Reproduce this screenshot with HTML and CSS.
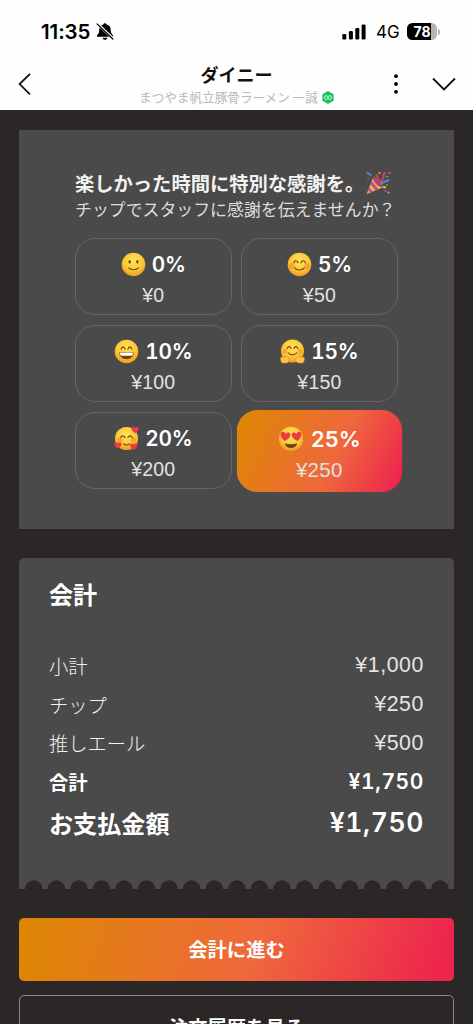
FILE: index.html
```html
<!DOCTYPE html>
<html lang="ja">
<head>
<meta charset="utf-8">
<meta name="viewport" content="width=device-width, initial-scale=1">
<title>ダイニー</title>
<link rel="stylesheet" href="styles.css">
</head>
<body>
<svg class="defs" width="0" height="0" aria-hidden="true">
  <defs>
    <radialGradient id="skin" cx=".5" cy=".35" r=".68"><stop offset="0" stop-color="#ffe45c"/><stop offset=".6" stop-color="#fcc735"/><stop offset="1" stop-color="#ee9420"/></radialGradient>
    <linearGradient id="cone" x1="0" y1="1" x2="1" y2="0"><stop offset="0" stop-color="#f0a62d"/><stop offset="1" stop-color="#ffd465"/></linearGradient>
    <path id="heart" d="M0 3.6C-5 .5-4.3-3.2-2-3.2-.8-3.2-.1-2.3 0-1.6.1-2.3.8-3.2 2-3.2 4.3-3.2 5 .5 0 3.6Z" fill="#ed3b43"/>
  </defs>
</svg>
<header class="top">
  <div class="status">
    <div class="clock"><span>11:35</span>
      <svg width="18" height="19" viewBox="0 0 18 19"><path d="M9 1.200c-.9 0-1.500.6-1.600 1.300C4.600 3.200 3.300 5 3.300 7.500c0 3.200-.8 4.300-2 5.400-.8.8-.6 1.900.5 1.900h14.400c1.100 0 1.300-1.100.5-1.900-1.200-1.100-2-2.200-2-5.400 0-2.500-1.300-4.300-4.100-5C10.500 1.800 9.900 1.200 9 1.200Z"/><path d="M6.600 15.700h4.800c-.3 1.400-1.200 2.100-2.400 2.100s-2.100-.7-2.400-2.100Z"/><path d="M1.200 1.500 17.200 16.700" stroke="#fff" stroke-width="2.600"/><path d="M1 1.900 16.800 17" stroke="#000" stroke-width="1.200" stroke-linecap="round"/></svg>
    </div>
    <div class="signal">
      <svg width="25" height="16" viewBox="0 0 25 16"><rect x=".3" y="10" width="4" height="5.500" rx="1.2"/><rect x="6.900" y="7" width="4" height="8.500" rx="1.2"/><rect x="13.300" y="4" width="4" height="11.500" rx="1.2"/><rect x="19.600" y=".5" width="4" height="15" rx="1.2"/></svg>
      <span class="network">4G</span>
      <span class="battery">78</span><i class="tip"></i>
    </div>
  </div>
  <div class="nav">
    <svg class="back" width="14" height="24" viewBox="0 0 14 24"><path d="M12 1.800 1.600 12.100 12 22.400" fill="none" stroke="#111" stroke-width="1.800"/></svg>
    <div class="titles">
      <h1>ダイニー</h1>
      <p><span>まつやま帆立豚骨ラーメン 一誠</span>
        <svg width="12" height="13" viewBox="0 0 12 13"><path d="M6 .8 10.900 3.500v6L6 12.200 1.100 9.500v-6Z" fill="#18c363" stroke="#18c363" stroke-width="1.400" stroke-linejoin="round"/><g fill="none" stroke="#d9ffe8" stroke-width=".9"><ellipse cx="4.200" cy="6.500" rx="1.500" ry="2"/><ellipse cx="7.800" cy="6.500" rx="1.500" ry="2"/></g></svg>
      </p>
    </div>
    <div class="actions">
      <svg width="4" height="20" viewBox="0 0 4 20"><circle cx="2" cy="2.200" r="1.900"/><circle cx="2" cy="10" r="1.900"/><circle cx="2" cy="17.800" r="1.900"/></svg>
      <svg width="24" height="14" viewBox="0 0 24 14"><path d="m1 1.500 11 11 11-11" fill="none" stroke="#111" stroke-width="1.800"/></svg>
    </div>
  </div>
</header>
<main>
  <section class="tips">
    <div class="lead"><h2>楽しかった時間に特別な感謝を。</h2>
      <svg width="26" height="26" viewBox="0 0 26 26"><path d="M1.500 24.200 8.200 7.500c3 .8 8 5.800 9.500 9.700Z" fill="url(#cone)"/><path d="m7 11 6.500 8-3 1.500L5.200 14Zm-3 6 4 4.700-2.600 1L2.800 20Z" fill="#b5529c"/><ellipse cx="13" cy="12" rx="2.800" ry="6.700" transform="rotate(-43 13 12)" fill="#a64b5b"/><path d="M12 11.500c1.500-2.500 1-5.500-1-7M15 13c1-4 4.500-3.500 3.500-7-.5-2 1-3 2.500-2.500" fill="none" stroke="#d83f68" stroke-width="2"/><path d="M1.500 3c2-1 3 2.500 5 2" fill="none" stroke="#457fc4" stroke-width="2.200"/><path d="M16 14c3-4 4-1 8-4.500" fill="none" stroke="#5286d8" stroke-width="2.300"/><path d="m18 17 3 .5" stroke="#ecb65c" stroke-width="2"/><g fill="#f3ae3a"><circle cx="14.500" cy="3" r="1"/><circle cx="22" cy="6.500" r=".8"/><circle cx="22" cy="15" r=".8"/></g><g fill="#c95284"><circle cx="24.500" cy="3" r="1.200"/><circle cx="20.500" cy="21" r="1"/><circle cx="3" cy="9" r=".8"/></g><circle cx="23.500" cy="22.500" r="1" fill="#93aee8"/></svg>
    </div>
    <p class="sub">チップでスタッフに感謝を伝えませんか？</p>
    <div class="options">
      <button class="option">
        <span class="rate"><svg width="26" height="26" viewBox="0 0 26 26"><circle cx="13" cy="13" r="12.300" fill="url(#skin)"/><g fill="#704116"><ellipse cx="9" cy="10.200" rx="1.200" ry="1.900"/><ellipse cx="17" cy="10.200" rx="1.200" ry="1.900"/></g><path d="M8 16.500c2.500 2.700 7.500 2.700 10 0" fill="none" stroke="#704116" stroke-width="1.100" stroke-linecap="round"/></svg>0%</span>
        <span class="yen">¥0</span>
      </button>
      <button class="option">
        <span class="rate"><svg width="26" height="26" viewBox="0 0 26 26"><circle cx="13" cy="13" r="12.300" fill="url(#skin)"/><g fill="#f58632" opacity=".5"><circle cx="5" cy="14.500" r="3"/><circle cx="21" cy="14.500" r="3"/></g><path d="M7 11.200c1-2.800 3.500-2.800 4.500 0m3 0c1-2.800 3.500-2.800 4.500 0M8 16.500c2.500 3 7.500 3 10 0" fill="none" stroke="#704116" stroke-width="1.200" stroke-linecap="round"/></svg>5%</span>
        <span class="yen">¥50</span>
      </button>
      <button class="option">
        <span class="rate"><svg width="26" height="26" viewBox="0 0 26 26"><circle cx="13" cy="13" r="12.300" fill="url(#skin)"/><path d="M7.500 10.500c.8-3 3.200-3 4 0m3 0c.8-3 3.200-3 4 0" fill="none" stroke="#704116" stroke-width="1.200" stroke-linecap="round"/><path d="M5.500 14h15c0 4.300-3.300 7-7.500 7s-7.500-2.700-7.500-7Z" fill="#704116"/><path d="M6.200 14.300h13.600c0 1.900-.6 3-1.300 3h-11c-.7 0-1.300-1.100-1.300-3Z" fill="#fff"/></svg>10%</span>
        <span class="yen">¥100</span>
      </button>
      <button class="option">
        <span class="rate"><svg width="26" height="26" viewBox="0 0 26 26"><circle cx="13" cy="12.500" r="12" fill="url(#skin)"/><g fill="#f58632" opacity=".5"><circle cx="5" cy="13" r="2.500"/><circle cx="21" cy="13" r="2.500"/></g><path d="M7.500 9.800c1-2.500 3-2.500 4 0m3 0c1-2.500 3-2.500 4 0M8.500 14.300c2.500 3 6.500 3 9 0" fill="none" stroke="#704116" stroke-width="1.200" stroke-linecap="round"/><g fill="#ffc247" stroke="#dd8221" stroke-width=".6"><path d="M2 25C.5 23 .8 21 .5 19.500l2-1 1.200 1.300 2.300-2.500 1.500 1 1.500 1.200c1.500 2 .5 4.500-1.500 5.500Z"/><path d="M24 25c1.500-2 1.200-4 1.500-5.500l-2-1-1.200 1.300-2.300-2.500-1.500 1-1.500 1.200c-1.500 2-.5 4.500 1.500 5.500Z"/></g></svg>15%</span>
        <span class="yen">¥150</span>
      </button>
      <button class="option">
        <span class="rate"><svg width="26" height="26" viewBox="0 0 26 26"><circle cx="13" cy="13" r="12" fill="url(#skin)"/><g fill="#f58632" opacity=".5"><circle cx="6" cy="14.500" r="2.800"/><circle cx="20" cy="14.500" r="2.800"/></g><path d="M7 12c1-2.300 3.500-2.300 4.500 0m3 0c1-2.300 3.500-2.300 4.500 0M10 18.500c1.700 1.700 4.300 1.700 6 0" fill="none" stroke="#704116" stroke-width="1.200" stroke-linecap="round"/><use href="#heart" x="22" y="4"/><use href="#heart" x="4" y="20"/><use href="#heart" x="20.500" y="21.500"/></svg>20%</span>
        <span class="yen">¥200</span>
      </button>
      <button class="option selected">
        <span class="rate"><svg width="26" height="26" viewBox="0 0 26 26"><circle cx="13" cy="13" r="12" fill="url(#skin)"/><use href="#heart" transform="translate(7.300 10.500) rotate(8) scale(1.300)"/><use href="#heart" transform="translate(18.700 10.500) rotate(-8) scale(1.300)"/><path d="M7 17.500c4 1 8 1 12 0-.5 2.800-2.700 4.500-6 4.500s-5.500-1.700-6-4.500Z" fill="#704116"/></svg>25%</span>
        <span class="yen">¥250</span>
      </button>
    </div>
  </section>
  <section class="bill">
    <h2>会計</h2>
    <dl>
      <div class="row"><dt>小計</dt><dd>¥1,000</dd></div>
      <div class="row"><dt>チップ</dt><dd>¥250</dd></div>
      <div class="row"><dt>推しエール</dt><dd>¥500</dd></div>
      <div class="row sum"><dt>合計</dt><dd>¥1,750</dd></div>
      <div class="row total"><dt>お支払金額</dt><dd>¥1,750</dd></div>
    </dl>
    <div class="scallops"></div>
  </section>
  <button class="pay">会計に進む</button>
  <button class="history">注文履歴を見る</button>
</main>
</body>
</html>
```
FILE: styles.css
```css
* { box-sizing: border-box; }
html { height: 1024px; overflow: hidden; }
body { margin: 0; height: 1024px; overflow: hidden; background: #2b2726; color: #f2f2f2; font-family: "Noto Sans CJK JP", sans-serif; }
h1, h2, p, dl, dd { margin: 0; }
svg { display: block; flex: none; }
button { font: inherit; color: inherit; padding: 0; }
.defs { position: absolute; }

.top { height: 110px; background: #fefefe; color: #000; }
.status { height: 62px; padding: 1px 33px 0 41px; display: flex; align-items: center; justify-content: space-between; font-family: Inter, sans-serif; }
.clock { display: flex; align-items: center; gap: 6px; font-size: 20.5px; font-weight: 600; letter-spacing: -.1px; }
.signal { display: flex; align-items: center; }
.signal svg { margin-right: 2px; }
.network { margin-left: 7px; width: 31px; font-size: 17px; font-weight: 400; }
.battery { width: 30px; height: 17px; border-radius: 5.500px; background: linear-gradient(90deg, #000 80%, #b5b5b5 80%); color: #fff; font-size: 14px; font-weight: 700; line-height: 17px; text-align: center; }
.tip { width: 2px; height: 6px; margin-left: 1px; border-radius: 0 3px 3px 0; background: #b5b5b5; }
.nav { height: 48px; padding: 0 17px 0 18px; display: grid; grid-template-columns: 62px 1fr 63px; }
.back { margin-top: 9.500px; }
.titles { display: flex; flex-direction: column; align-items: center; color: #111; }
.titles h1 { font-size: 18px; line-height: 24px; font-weight: 700; }
.titles p { display: flex; align-items: center; gap: 4px; height: 22px; font-size: 12.600px; line-height: 22px; color: #bababa; white-space: nowrap; }
.actions { padding-top: 11.500px; display: flex; align-items: flex-start; justify-content: space-between; }
.actions svg:first-child { margin-left: 1px; }
.actions svg:last-child { margin-top: 3px; }

main { padding: 19.500px 19px 0; display: flex; flex-direction: column; }
.tips { height: 399px; padding: 40px 56px 0; background: #4a4a4a; }
.lead { display: flex; align-items: center; gap: 1px; height: 27px; white-space: nowrap; }
.lead h2 { font-size: 19.300px; line-height: 27px; font-weight: 700; }
.sub { font-size: 16.900px; line-height: 24px; height: 26px; white-space: nowrap; color: #dedede; }
.options { margin-top: 15px; display: grid; grid-template-columns: 156.500px 156.500px; grid-auto-rows: 77.500px; gap: 9.700px; }
.option { border: 1.500px solid #656565; border-radius: 20px; background: none; display: flex; flex-direction: column; align-items: center; padding-top: 13px; font-family: Inter, sans-serif; color: #fff; }
.rate { display: flex; align-items: center; gap: 6px; height: 26px; font-size: 20.800px; font-weight: 600; letter-spacing: -.2px; font-feature-settings: "tnum"; }
.rate svg { width: 25px; height: 25px; }
.yen { height: 26px; margin-top: 4px; font-family: "Liberation Sans", sans-serif; font-size: 19.500px; letter-spacing: .2px; line-height: 27px; color: #e2e2e2; }
.selected { border-color: transparent; background: linear-gradient(115deg, #dc8800, #ef683c 59%, #ed254d 96%) border-box; transform: scale(1.055); }

.bill { height: 331px; margin-top: 29px; padding: 20px 30px 0; border-radius: 5px 5px 0 0; background: #4a4a4a; display: flex; flex-direction: column; }
.bill h2 { font-size: 24.100px; line-height: 32px; font-weight: 700; color: #fff; }
.bill dl { margin-top: 37px; }
.row { height: 38.700px; display: flex; align-items: center; justify-content: space-between; font-size: 19.300px; font-weight: 300; }
.row dd { font-family: "Liberation Sans", sans-serif; font-size: 21.300px; font-weight: 400; letter-spacing: .6px; color: #e6e6e6; }
.row.sum { font-weight: 700; color: #fff; }
.row.sum dd { font-family: Inter, sans-serif; font-size: 21px; font-weight: 600; letter-spacing: .6px; font-feature-settings: "tnum"; color: #fff; }
.row.total { height: 42px; font-size: 24.100px; font-weight: 700; color: #fff; }
.row.total dd { font-family: Inter, sans-serif; font-size: 26.500px; font-weight: 600; letter-spacing: .6px; font-feature-settings: "tnum"; color: #fff; }
.scallops { height: 9px; margin: auto -27.500px 0; background: radial-gradient(circle at 50% 9px, #2b2726 8.300px, transparent 9px) .5px 0 / 22.570px 9px repeat-x; }

.pay, .history { height: 63px; border-radius: 5px; font-size: 19.300px; font-weight: 700; line-height: 28px; color: #fff; }
.pay { margin-top: 29px; border: 0; background: linear-gradient(110deg, #dc8800, #ef683c 54%, #ed254d 96%); }
.history { margin-top: 14.500px; border: 1.500px solid #8a8785; background: none; flex: none; }
```
